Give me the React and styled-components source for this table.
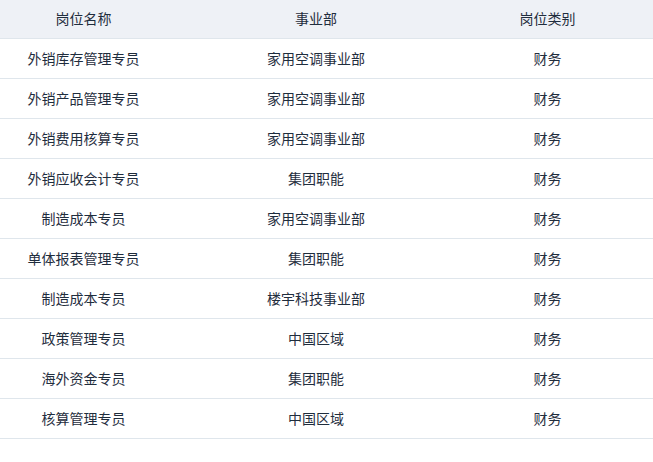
import React from 'react';
import styled, { createGlobalStyle } from 'styled-components';

const GlobalStyle = createGlobalStyle`
    html, body {
        margin: 0;
        padding: 0;
        background: #fff;
    }
    body {
        font-family: "Noto Sans CJK SC", "Noto Sans", sans-serif;
    }
`

const rows = [
    ['外销库存管理专员', '家用空调事业部', '财务'],
    ['外销产品管理专员', '家用空调事业部', '财务'],
    ['外销费用核算专员', '家用空调事业部', '财务'],
    ['外销应收会计专员', '集团职能', '财务'],
    ['制造成本专员', '家用空调事业部', '财务'],
    ['单体报表管理专员', '集团职能', '财务'],
    ['制造成本专员', '楼宇科技事业部', '财务'],
    ['政策管理专员', '中国区域', '财务'],
    ['海外资金专员', '集团职能', '财务'],
    ['核算管理专员', '中国区域', '财务'],
]

const Table = styled.div`
    width: 653px;
    font-size: 14px;
    color: #1f2d3d;
`

const Row = styled.div`
    display: grid;
    grid-template-columns: 167px 298px 165px 1fr;
    height: ${props => props.head ? '38px' : '39px'};
    background: ${props => props.head ? '#eef1f6' : '#fff'};
    border-bottom: 1px solid #dfe6ec;
`

const Cell = styled.div`
    display: flex;
    align-items: center;
    justify-content: center;
    padding-bottom: 2px;
    white-space: nowrap;
`

export default function App() {
    return (
        <>
            <GlobalStyle />
            <Table>
                <Row head>
                    <Cell>岗位名称</Cell>
                    <Cell>事业部</Cell>
                    <Cell>岗位类别</Cell>
                    <Cell />
                </Row>
                {rows.map((r, i) => (
                    <Row key={i}>
                        <Cell>{r[0]}</Cell>
                        <Cell>{r[1]}</Cell>
                        <Cell>{r[2]}</Cell>
                        <Cell />
                    </Row>
                ))}
            </Table>
        </>
    )
}
